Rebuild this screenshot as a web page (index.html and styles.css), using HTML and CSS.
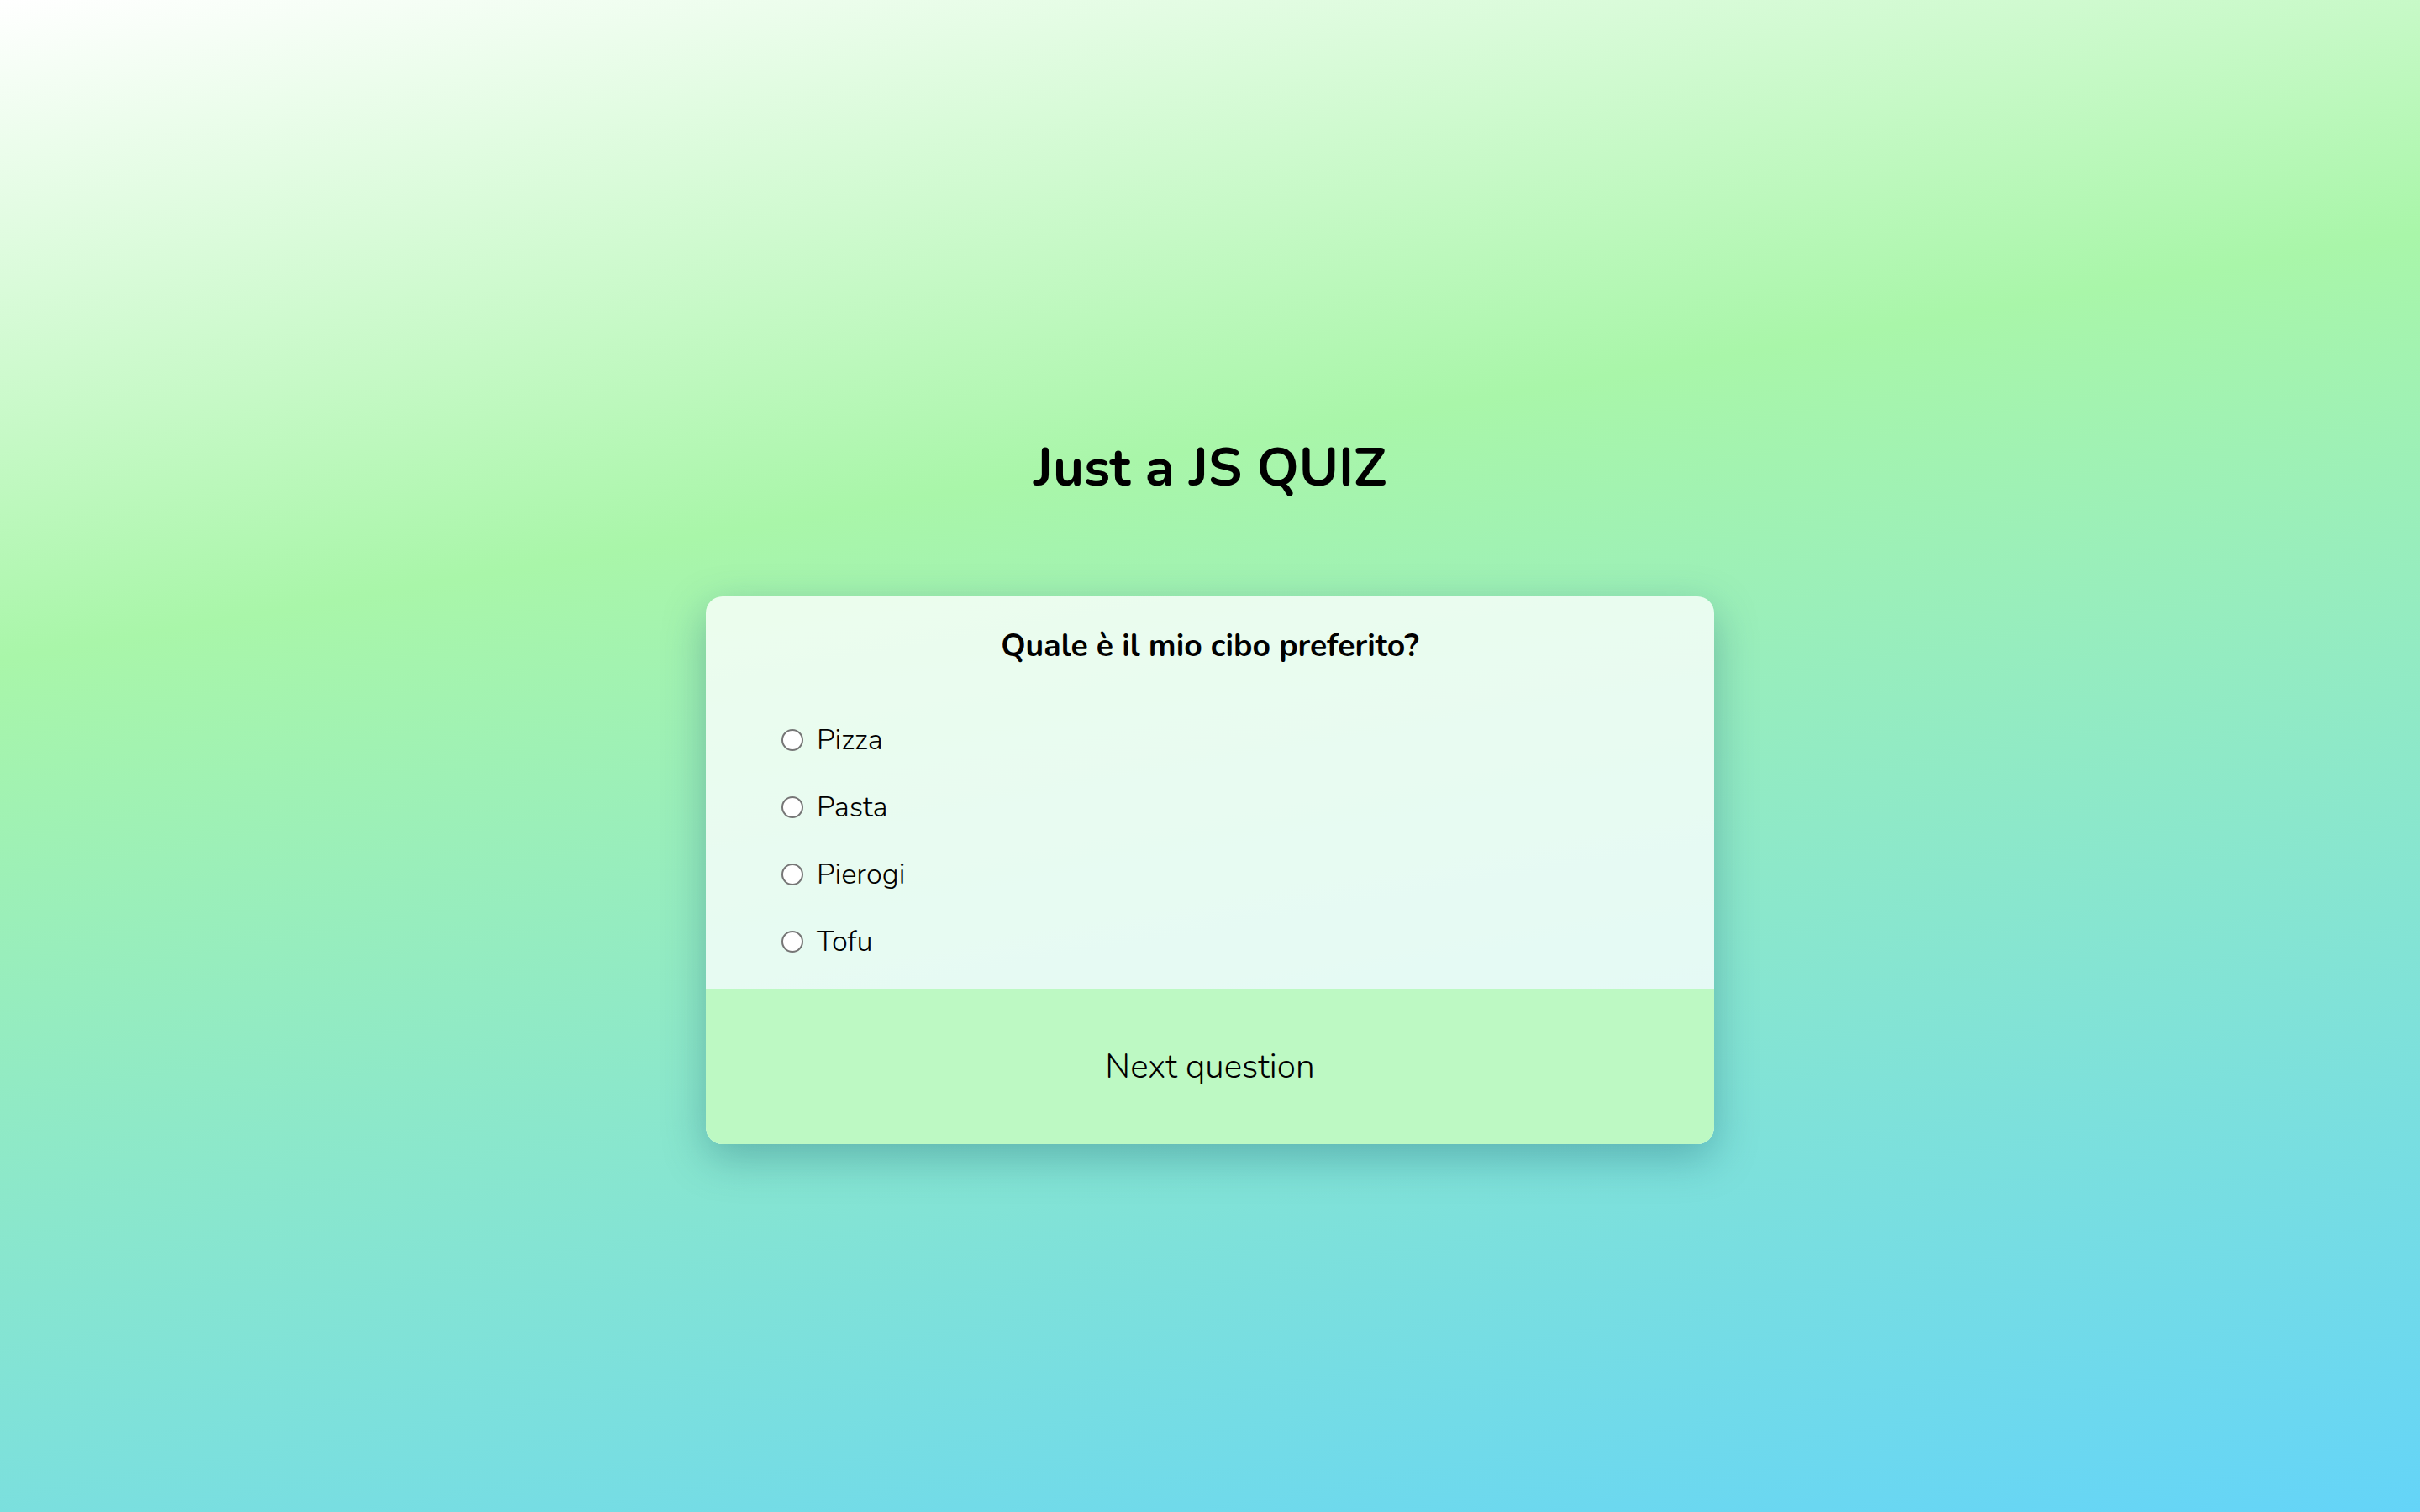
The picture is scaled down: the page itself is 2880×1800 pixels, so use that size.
FILE: index.html
```html
<!DOCTYPE html>
<html lang="it">
<head>
<meta charset="utf-8">
<title>Just a JS QUIZ</title>
<link rel="stylesheet" href="styles.css">
</head>
<body>
<main class="page">
  <h1 class="title">Just a JS QUIZ</h1>
  <section class="quiz">
    <div class="quiz-body">
      <h2 class="question">Quale è il mio cibo preferito?</h2>
      <ul class="answers">
        <li class="answer"><label class="answer-label"><input class="radio" type="radio" name="a"><span>Pizza</span></label></li>
        <li class="answer"><label class="answer-label"><input class="radio" type="radio" name="a"><span>Pasta</span></label></li>
        <li class="answer"><label class="answer-label"><input class="radio" type="radio" name="a"><span>Pierogi</span></label></li>
        <li class="answer"><label class="answer-label"><input class="radio" type="radio" name="a"><span>Tofu</span></label></li>
      </ul>
    </div>
    <button class="next" type="button">Next question</button>
  </section>
</main>
</body>
</html>
```
FILE: styles.css
```css
html, body {
  margin: 0;
  padding: 0;
  height: 100%;
}
body {
  font-family: "Nunito", "Lato", "Noto Sans", sans-serif;
  color: #000;
  background: linear-gradient(170deg, #ffffff 0%, #a9f6a9 34%, #64d4f8 100%);
}
.page {
  min-height: 100vh;
  box-sizing: border-box;
  padding-top: 80px;
  display: flex;
  flex-direction: column;
  align-items: center;
  justify-content: center;
}
.title {
  margin: 0 0 114px;
  font-size: 64px;
  font-weight: 700;
  line-height: 77px;
}
.quiz {
  width: 1200px;
  border-radius: 20px;
  overflow: hidden;
  background: rgba(255, 255, 255, 0.78);
  box-shadow: 0 16px 50px rgba(20, 90, 110, 0.35);
  display: flex;
  flex-direction: column;
}
.quiz-body {
  padding: 34px 90px 16px;
}
.question {
  margin: 0 0 48px;
  text-align: center;
  font-size: 37.4px;
  font-weight: 700;
  line-height: 49px;
}
.answers {
  list-style: none;
  margin: 0;
  padding: 0;
}
.answer {
  height: 80px;
  display: flex;
  align-items: center;
  font-size: 34.5px;
  font-weight: 300;
}
.answer-label {
  display: flex;
  align-items: center;
  gap: 16px;
}
.radio {
  appearance: none;
  -webkit-appearance: none;
  margin: 0;
  width: 26px;
  height: 26px;
  border: 2px solid #767676;
  border-radius: 50%;
  background: #fff;
  box-sizing: border-box;
}
.next {
  height: 185px;
  border: none;
  margin: 0;
  background: #bdf9c3;
  font-family: inherit;
  font-size: 40.5px;
  font-weight: 300;
  color: #000;
}
```
